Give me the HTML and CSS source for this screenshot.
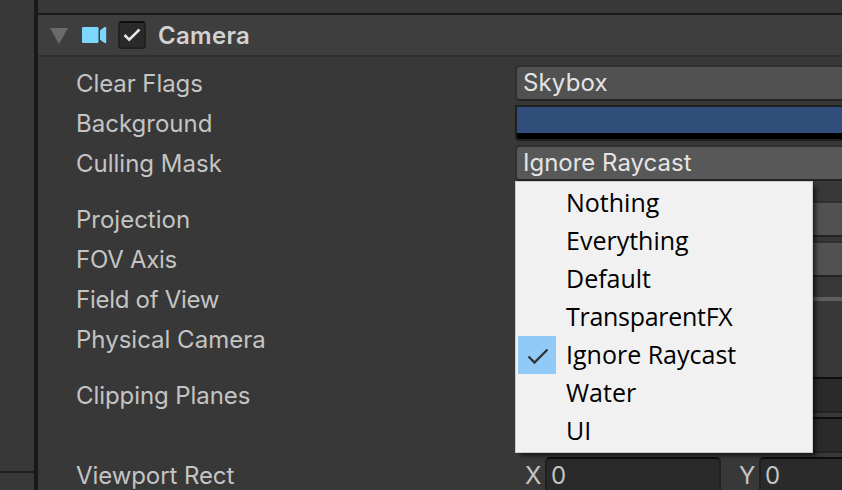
FILE: index.html
```html
<!DOCTYPE html>
<html lang="en">
<head>
<meta charset="utf-8">
<title>Camera</title>
<link rel="stylesheet" href="styles.css">
</head>
<body>
<div class="editor">
  <aside class="side"><div class="side-foot"></div></aside>
  <main class="inspector">
    <header class="component">
      <svg class="fold" width="18" height="16" viewBox="0 0 18 16"><path d="M0 0h18L9 16z" fill="#6b6b6b"/></svg>
      <svg class="camera" width="26" height="16" viewBox="0 0 26 16"><rect width="16.500" height="16" rx="1.300" fill="#7fd6fd"/><path d="M18 4q0-.8.800-1.200L22.500 0H24.200V16h-1.700L18.800 13.200Q18 12.800 18 12z" fill="#7fd6fd"/></svg>
      <span class="toggle"><svg width="18" height="14" viewBox="0 0 18 14"><path d="M1.500 7l4.700 4.700L16.500 1.500" fill="none" stroke="#e8e8e8" stroke-width="2.500"/></svg></span>
      <h1>Camera</h1>
    </header>
    <div class="props">
      <div class="row"><label>Clear Flags</label><div class="drop">Skybox</div></div>
      <div class="row"><label class="snug">Background</label><div class="color"></div></div>
      <div class="row"><label class="snug">Culling Mask</label><div class="drop open">Ignore Raycast
        <ul class="menu">
          <li>Nothing</li>
          <li>Everything</li>
          <li>Default</li>
          <li class="tight">TransparentFX</li>
          <li><svg class="tick" width="38" height="38" viewBox="0 0 38 38"><path d="M10.500 20.500l6 6L29.500 13.500" fill="none" stroke="#333" stroke-width="2.300"/></svg>Ignore Raycast</li>
          <li>Water</li>
          <li>UI</li>
        </ul></div></div>
      <div class="row group"><label class="snug">Projection</label><div class="drop"></div></div>
      <div class="row"><label class="tight">FOV Axis</label><div class="drop"></div></div>
      <div class="row"><label class="tight">Field of View</label><div class="track"></div></div>
      <div class="row"><label class="snug">Physical Camera</label></div>
      <div class="row group"><label>Clipping Planes</label><div class="input"></div></div>
      <div class="row"><label></label><div class="input"></div></div>
      <div class="row"><label>Viewport Rect</label><div class="pair"><span class="axis">X</span><div class="input">0</div><span class="axis y">Y</span><div class="input">0</div></div></div>
    </div>
  </main>
</div>
</body>
</html>
```
FILE: styles.css
```css
* { box-sizing: border-box; }
body {
  margin: 0;
  overflow: hidden;
  background: #383838;
  color: #c4c4c4;
  font: 24px/36px Inter, "Liberation Sans", sans-serif;
}
.editor { display: flex; width: 842px; height: 490px; overflow: hidden; }
.side {
  display: flex;
  align-items: flex-end;
  flex: 0 0 38px;
  border-right: 4px solid #191919;
}
.side-foot { width: 100%; height: 19px; border-top: 2px solid #202020; }
.inspector { flex: 1; min-width: 0; padding-top: 13px; }
.component {
  display: flex;
  align-items: center;
  height: 44px;
  padding-left: 12px;
  border-top: 2px solid #1a1a1a;
  border-bottom: 2px solid #303030;
  background: #3e3e3e;
}
.fold { margin-top: 1px; }
.camera { margin-left: 14px; }
.toggle {
  display: flex;
  align-items: center;
  justify-content: center;
  width: 28px;
  height: 28px;
  margin-left: 10px;
  border: 2px solid #212121;
  border-top-color: #0d0d0d;
  border-radius: 4px;
  background: #2a2a2a;
}
h1 { margin: 2px 0 0 12px; font-size: 24px; font-weight: 600; line-height: 36px; color: #d2d2d2; letter-spacing: .3px; }
.props { display: flex; flex-direction: column; gap: 4px; padding: 8px 0 0 38px; }
.row { display: grid; grid-template-columns: 439px 1fr; height: 36px; }
.row.group { margin-top: 16px; }
label { padding-top: 1px; white-space: nowrap; letter-spacing: -.08px; }
.snug { letter-spacing: 0; }
.tight { letter-spacing: -.28px; }
.drop {
  position: relative;
  height: 36px;
  padding-left: 6px;
  border: 2px solid #303030;
  border-right: 0;
  border-bottom-color: #242424;
  border-radius: 5px 0 0 5px;
  background: #515151;
  color: #e4e4e4;
  line-height: 32px;
  letter-spacing: .15px;
}
.drop.open { background: #585858; letter-spacing: 0; }
.color { height: 36px; border: 2px solid #202020; border-right: 0; border-bottom-left-radius: 4px; background: linear-gradient(#314d79 26px, #000 26px); }
.track { align-self: center; height: 4px; margin-top: -2px; background: #5e5e5e; }
.input {
  height: 36px;
  padding-left: 5px;
  border: 2px solid #212121;
  border-top-color: #0d0d0d;
  border-radius: 5px;
  background: #2a2a2a;
  line-height: 34px;
}
.pair { display: grid; grid-template-columns: 30px 176px 38px 1fr; }
.pair .input { padding-left: 4px; }
.axis { padding: 1px 0 0 10px; }
.axis.y { padding-left: 18px; }
.pair .input:last-child, .row > .input { border-right: 0; border-radius: 5px 0 0 5px; }
.menu {
  position: absolute;
  z-index: 1;
  top: 34px;
  left: -2px;
  width: 298px;
  height: 272px;
  margin: 0;
  padding: 2px;
  border: 1px solid #ccc;
  background: #f1f1f1;
  box-shadow: 4px 4px 4px -1px rgba(0, 0, 0, .55);
  color: #000;
  font: 25px/36px "Open Sans", "Noto Sans", sans-serif;
  letter-spacing: 0;
  list-style: none;
}
.menu li { position: relative; height: 38px; padding-left: 48px; }
.tick { position: absolute; top: 0; left: 0; background: #91c9f7; }
```
